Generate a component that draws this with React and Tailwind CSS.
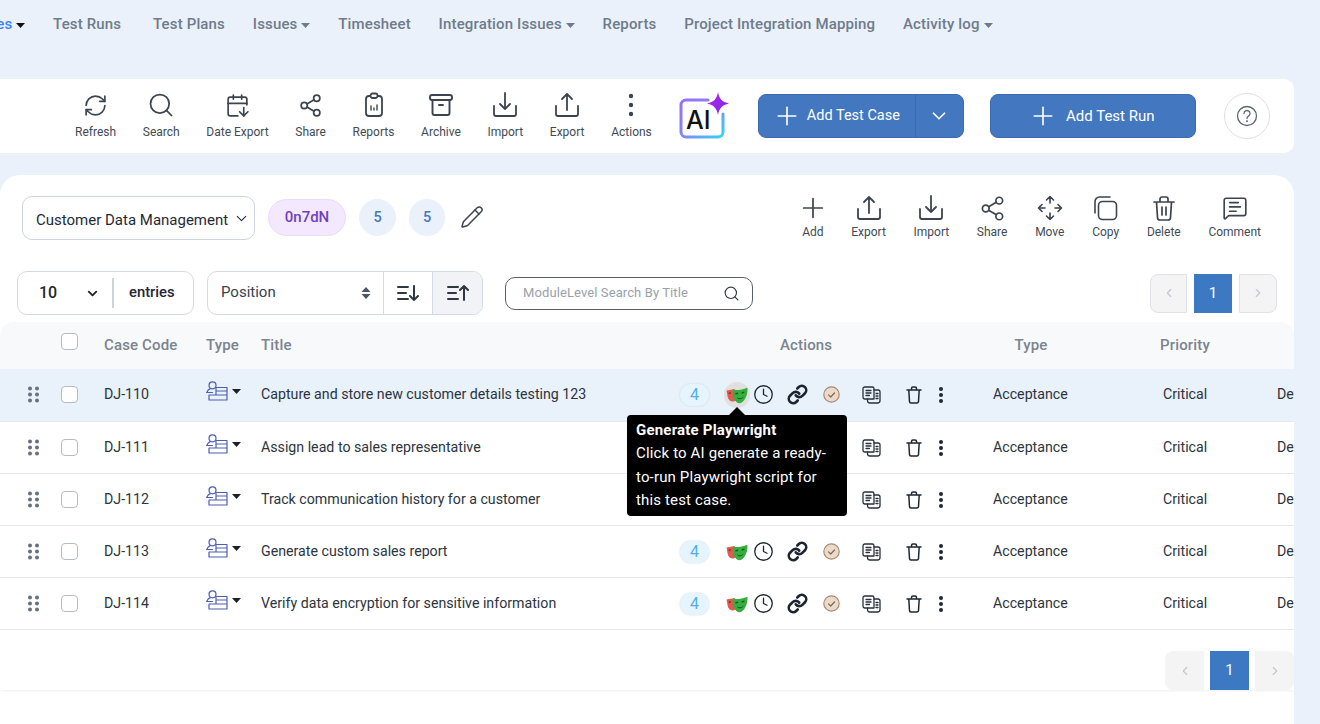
import React from "react";
import { RefreshCw, Search, CalendarArrowDown, Share2, Plus, ChevronDown, Pencil, MessageSquareText, Clock, Link, ChevronLeft, ChevronRight } from "lucide-react";

const Caret = ({ c = "#6f7b8b" }) => (
  <svg width="9" height="5" viewBox="0 0 9 5" className="ml-[4px] inline-block align-middle"><path d="M0 0h9L4.5 5z" fill={c} /></svg>
);

const Tray = ({ up, size = 26 }) => (
  <svg width={size} height={size} viewBox="0 0 26 26" fill="none" stroke="#3c444f" strokeWidth="1.8" strokeLinecap="round" strokeLinejoin="round">
    <path d="M2 14v8a2 2 0 0 0 2 2h18a2 2 0 0 0 2-2v-8" />
    {up ? <path d="M13 18V2M8 7l5-5 5 5" /> : <path d="M13 1v16M8 12l5 5 5-5" />}
  </svg>
);

const Clip = () => (
  <svg width="24" height="26" viewBox="0 0 24 26" fill="none" stroke="#3c444f" strokeWidth="1.8" strokeLinecap="round" strokeLinejoin="round">
    <rect x="4" y="4" width="16" height="20" rx="3" />
    <rect x="8.5" y="1.5" width="7" height="4.5" rx="2" fill="#fff" />
    <path d="M9 18v-4M12 18v-2M15 18v-5" strokeWidth="1.4" />
  </svg>
);

const Arch = () => (
  <svg width="26" height="26" viewBox="0 0 26 26" fill="none" stroke="#3c444f" strokeWidth="1.9" strokeLinecap="round" strokeLinejoin="round">
    <rect x="2" y="3" width="22" height="5" rx="2" />
    <path d="M4.5 8v13a2 2 0 0 0 2 2h13a2 2 0 0 0 2-2V8M11 13h4" />
  </svg>
);

const Dots = ({ r = 2.2, gap = 9, c = "#3c444f", h = 26 }) => (
  <svg width="8" height={h} viewBox={`0 0 8 ${h}`}>
    {[-gap, 0, gap].map((d) => <circle key={d} cx="4" cy={h / 2 + d} r={r} fill={c} />)}
  </svg>
);

const Tool = ({ icon, label, tight }) => (
  <div className="flex flex-col items-center">
    <div className="h-[26px] w-0 flex items-center justify-center [&>svg]:shrink-0">{icon}</div>
    <span className={`${tight ? "mt-[3px]" : "mt-[6px]"} text-[12px] leading-[16px] text-[#3f4a56] whitespace-nowrap`}>{label}</span>
  </div>
);

const MoveIcon = () => (
  <svg width="26" height="26" viewBox="0 0 26 26" fill="none" stroke="#3c444f" strokeWidth="1.600" strokeLinecap="round" strokeLinejoin="round">
    <path d="M9.500 5 13 1.500 16.500 5M13 1.500V8M9.500 21 13 24.500 16.500 21M13 24.500V18M5 9.500 1.500 13 5 16.500M1.500 13H8M21 9.500 24.500 13 21 16.500M24.500 13H18" />
  </svg>
);

const CopyIcon = () => (
  <svg width="25" height="25" viewBox="0 0 25 25" fill="none" stroke="#3c444f" strokeWidth="1.600" strokeLinecap="round" strokeLinejoin="round">
    <rect x="5.500" y="5.500" width="18" height="18" rx="4" />
    <path d="M2 17V5.500A4.500 4.500 0 0 1 6.500 1H17" />
  </svg>
);

const BinIcon = () => (
  <svg width="22" height="25" viewBox="0 0 22 25" fill="none" stroke="#3c444f" strokeWidth="1.700" strokeLinecap="round" strokeLinejoin="round">
    <path d="M1 6h20M7 6V3a2 2 0 0 1 2-2h4a2 2 0 0 1 2 2v3M3.500 6l1 15.500A2.500 2.500 0 0 0 7 24h8a2.500 2.500 0 0 0 2.500-2.500L18.500 6M9 11v8M13 11v8" />
  </svg>
);

const AiLogo = () => (
  <svg width="50" height="48" viewBox="0 0 50 48" fill="none" className="overflow-visible">
    <defs>
      <linearGradient id="aig" x1="0" y1="0" x2="1" y2="1">
        <stop offset="0" stopColor="#9b6cf5" />
        <stop offset="0.55" stopColor="#7d8cf8" />
        <stop offset="1" stopColor="#2fd6f2" />
      </linearGradient>
      <linearGradient id="star" x1="0" y1="0" x2="1" y2="1">
        <stop offset="0" stopColor="#c026d3" />
        <stop offset="1" stopColor="#6d28ff" />
      </linearGradient>
    </defs>
    <path d="M30 8H8a5 5 0 0 0-5 5V40a5 5 0 0 0 5 5h32a5 5 0 0 0 5-5V22" stroke="url(#aig)" strokeWidth="3" strokeLinecap="round" />
    <path d="M40 0c1 6.500 4 10 11 11.500-7 1.500-10 5-11 11.500-1-6.500-4-10-11-11.500 7-1.500 10-5 11-11.500z" fill="url(#star)" />
    <text x="8" y="37" fontFamily="Inter, sans-serif" fontSize="25" fontWeight="500" fill="#111">AI</text>
  </svg>
);

const Mask = () => (
  <svg width="22" height="18" viewBox="0 0 20 16">
    <path d="M0.500 4 8 2.500 9 12c-1 1.500-2 2-3 2C4 14 2 12 1.500 9.500z" fill="#e0584f" />
    <path d="M6 3.200C9 4 14.500 3.500 19.500 1.500 19.800 5.500 18.800 10 16.500 12.800c-1.500 1.800-3 2.700-4.200 2.700-1.500 0-3.300-1.200-4.500-3C6.600 10.300 6 6.500 6 3.200z" fill="#36ad3f" />
    <path d="M8.500 7l2.500-.6M14.200 6.300l2.500-.9" stroke="#14581c" strokeWidth="1.200" />
    <path d="M10 10c1.500 1.500 4 1.500 6-.6-1 3-5 3.400-6 .6z" fill="#14581c" />
    <path d="M2.500 6.500l2-.5" stroke="#7d1f1a" strokeWidth="1" />
  </svg>
);

const Done = () => (
  <svg width="17" height="17" viewBox="0 0 17 17" fill="none">
    <circle cx="8.500" cy="8.500" r="7.700" fill="#ecd9c8" stroke="#a98b75" strokeWidth="1.200" />
    <path d="M5.500 8.800l2.200 2.200 3.800-4" stroke="#7c6a5c" strokeWidth="1.200" strokeLinecap="round" strokeLinejoin="round" />
  </svg>
);

const Doc = () => (
  <svg width="19" height="18" viewBox="0 0 19 18" fill="none" stroke="#27303b" strokeWidth="1.300" strokeLinecap="round" strokeLinejoin="round">
    <path d="M2.800 1h7.400a1.800 1.800 0 0 1 1.800 1.800V13H2.800A1.800 1.800 0 0 1 1 11.200V2.800A1.800 1.800 0 0 1 2.800 1z" />
    <path d="M4 4.500h5M4 7h5M4 9.500h3.500" />
    <path d="M12 4h4a2 2 0 0 1 2 2v8.500a2.500 2.500 0 0 1-2.500 2.500H8a2.500 2.500 0 0 1-2.500-2.500V13" />
    <path d="M14 7.500h2M14 10h2M14 12.500h2" />
  </svg>
);

const Trash = () => (
  <svg width="16" height="18" viewBox="0 0 16 18" fill="none" stroke="#1f2731" strokeWidth="1.500" strokeLinecap="round" strokeLinejoin="round">
    <path d="M1 4h14M5.500 4V2.500a1.500 1.500 0 0 1 1.500-1.500h2a1.500 1.500 0 0 1 1.500 1.500V4M2.800 4l.7 11.500a1.500 1.500 0 0 0 1.500 1.500h6a1.500 1.500 0 0 0 1.500-1.500L13.200 4" />
  </svg>
);

const TypeIcon = () => (
  <svg width="22" height="20" viewBox="0 0 22 20" fill="none" stroke="#4d5fb0" strokeWidth="1.200" strokeLinecap="round" strokeLinejoin="round">
    <circle cx="6.500" cy="4.300" r="3.500" />
    <path d="M0.800 11.500c.7-2 2-3.300 3.500-3.900" />
    <path d="M0.800 11.500H6.500M10 6.500h11v12.500H3v-5h7V6.500zM10 14h11M10 10h11" />
  </svg>
);

const Check = ({ className = "" }) => (
  <span className={`block w-[17px] h-[17px] rounded-[4px] border border-[#b5bbc3] bg-white ${className}`} />
);

const cols = "grid grid-cols-[61px_43px_102px_55px_419px_313px_170px_114px_100px] items-center";

const Row = ({ code, title, active }) => (
  <div className={`${cols} ${active ? "h-[53px] pb-[1px] bg-[#e9f1fa]" : "h-[52px] bg-white"} border-b border-[#e6e8eb] text-[14.200px] text-[#2b3440]`}>
    <div className="pl-[28px]">
      <svg width="11" height="17" viewBox="0 0 11 17" fill="#66707e">
        {[2.500, 8.500, 14.500].flatMap((y) => [2, 9].map((x) => <circle key={`${x}-${y}`} cx={x} cy={y} r="2" />))}
      </svg>
    </div>
    <Check />
    <div>{code}</div>
    <div className="flex items-center -mt-[8px]">
      <TypeIcon />
      <svg width="9" height="5" viewBox="0 0 9 5" className="ml-[4px] mt-[2px]"><path d="M0 0h9L4.500 5z" fill="#1b2028" /></svg>
    </div>
    <div className="whitespace-nowrap">{title}</div>
    <div className="flex items-center">
      <span className="w-[29px] h-[22px] rounded-full bg-[#e6f4fd] shadow-[0_0_2px_#c7d4de] text-[#55ade9] text-[16px] flex items-center justify-center">4</span>
      <span className={`ml-[15px] w-[26px] h-[26px] rounded-full flex items-center justify-center ${active ? "bg-[#e0e0de]" : ""}`}><Mask /></span>
      <span className="w-[26px] flex justify-center"><Clock size={21} strokeWidth={1.500} color="#1f2731" /></span>
      <span className="ml-[4px] w-[34px] flex justify-center"><Link size={21} strokeWidth={3} color="#1b2430" /></span>
      <span className="w-[34px] flex justify-center"><Done /></span>
      <span className="w-[46px] flex justify-center"><Doc /></span>
      <span className="w-[40px] flex justify-center"><Trash /></span>
      <span className="w-[14px] flex justify-center"><Dots r={2} gap={6} c="#1f2731" h={18} /></span>
    </div>
    <div>Acceptance</div>
    <div>Critical</div>
    <div>Default</div>
  </div>
);

export default function App() {
  return (
    <div className="w-[1320px] h-[724px] overflow-hidden bg-[#eaf1fa] font-['Roboto',sans-serif]">
      <nav className="h-[79px] pt-[14px] flex items-start gap-[27.800px] text-[15px] leading-[20px] font-medium tracking-[0.15px] text-[#6f7b8b] whitespace-nowrap">
        <span className="-ml-[63.500px] text-[#3b82f6]">Test Cases<Caret c="#111" /></span>
        <span>Test Runs</span>
        <span className="ml-[4px]">Test Plans</span>
        <span>Issues<Caret /></span>
        <span>Timesheet</span>
        <span>Integration Issues<Caret /></span>
        <span>Reports</span>
        <span>Project Integration Mapping</span>
        <span>Activity log<Caret /></span>
      </nav>

      <section className="w-[1294px] h-[74px] bg-white rounded-r-[10px] flex items-center pl-[75px]">
        <div className="flex gap-[26.700px]">
          <Tool label="Refresh" icon={<RefreshCw size={25} strokeWidth={1.600} color="#3c444f" />} />
          <Tool label="Search" icon={<Search size={28} strokeWidth={1.500} color="#3c444f" />} />
          <Tool label="Date Export" icon={<CalendarArrowDown size={25} strokeWidth={1.600} color="#3c444f" />} />
          <Tool label="Share" icon={<Share2 size={25} strokeWidth={1.600} color="#3c444f" />} />
          <Tool label="Reports" icon={<Clip />} />
          <Tool label="Archive" icon={<Arch />} />
          <Tool label="Import" icon={<Tray />} />
          <Tool label="Export" icon={<Tray up />} />
          <Tool label="Actions" icon={<Dots />} />
        </div>
        <div className="ml-[26px]"><AiLogo /></div>
        <div className="ml-[30px] w-[206px] h-[44px] bg-[#4378c0] border border-[#3a6bae] rounded-[8px] flex items-center text-white text-[14.500px]">
          <div className="flex-1 flex items-center pl-[13px] gap-[5px]"><Plus size={30} strokeWidth={1.300} />Add Test Case</div>
          <div className="w-[48px] h-full border-l border-[#3a6bae] flex items-center justify-center"><ChevronDown size={22} strokeWidth={1.800} /></div>
        </div>
        <div className="ml-[26px] w-[206px] h-[44px] bg-[#4378c0] border border-[#3a6bae] rounded-[8px] flex items-center justify-center gap-[8px] pr-[3px] text-white text-[15px]">
          <Plus size={30} strokeWidth={1.300} />Add Test Run
        </div>
        <div className="ml-[28px] w-[46px] h-[46px] rounded-full bg-white border border-[#dbe0e7] flex items-center justify-center">
          <svg width="22" height="22" viewBox="0 0 22 22" fill="none" stroke="#5b6675" strokeWidth="1.300" strokeLinecap="round">
            <circle cx="11" cy="11" r="9.500" />
            <path d="M8 8.500a3 3 0 1 1 4.500 2.600c-1 .6-1.500 1.200-1.500 2.400" />
            <circle cx="11" cy="16.300" r=".4" />
          </svg>
        </div>
      </section>

      <main className="mt-[22px] w-[1294px] h-[549px] bg-white rounded-t-[20px] overflow-hidden pt-[21px]">
        <div className="h-[44px] flex items-start pl-[22px]">
          <div className="w-[233px] h-[44px] border border-[#cfd5de] rounded-[10px] flex items-center pl-[13px] text-[15px] text-[#1f2a37] whitespace-nowrap">
            <span className="pt-[4px]">Customer Data Management</span>
            <ChevronDown size={17} strokeWidth={1.500} className="ml-[5px]" />
          </div>
          <span className="ml-[13px] mt-[3px] w-[78px] h-[37px] rounded-full bg-[#f3e8fd] border border-[#eadbf9] flex items-center justify-center text-[15px] font-medium text-[#6f42c1]">0n7dN</span>
          <span className="ml-[13px] mt-[3px] w-[37px] h-[37px] rounded-full bg-[#eaf1fa] flex items-center justify-center text-[14.500px] font-medium text-[#4378c0]">5</span>
          <span className="ml-[13px] mt-[3px] w-[36px] h-[37px] rounded-full bg-[#eaf1fa] flex items-center justify-center text-[14.500px] font-medium text-[#4378c0]">5</span>
          <span className="ml-[15px] mt-[9px]"><Pencil size={24} strokeWidth={1.500} color="#3c444f" /></span>
          <div className="ml-auto mr-[33px] -mt-[1px] flex gap-[27.700px]">
            <Tool tight label="Add" icon={<Plus size={32} strokeWidth={1.300} color="#3c444f" />} />
            <Tool tight label="Export" icon={<Tray up />} />
            <Tool tight label="Import" icon={<Tray />} />
            <Tool tight label="Share" icon={<Share2 size={27} strokeWidth={1.500} color="#3c444f" />} />
            <Tool tight label="Move" icon={<MoveIcon />} />
            <Tool tight label="Copy" icon={<CopyIcon />} />
            <Tool tight label="Delete" icon={<BinIcon />} />
            <Tool tight label="Comment" icon={<MessageSquareText size={26} strokeWidth={1.500} color="#3c444f" />} />
          </div>
        </div>

        <div className="mt-[31px] h-[44px] flex items-center pl-[17px]">
          <div className="w-[177px] h-[44px] border border-[#d5dae2] rounded-[10px] flex items-center pl-[21px] text-[#1f2731]">
            <span className="text-[16px] font-medium w-[46px]">10</span>
            <ChevronDown size={15} strokeWidth={3} />
            <span className="ml-[12px] w-[2px] h-[30px] bg-[#ced3da]" />
            <span className="ml-[15px] text-[14.800px] font-medium -mt-[2px]">entries</span>
          </div>
          <div className="ml-[13px] w-[276px] h-[44px] border border-[#d5dae2] rounded-[10px] overflow-hidden flex items-center text-[15px] text-[#374151]">
            <div className="w-[175px] flex items-center pl-[13px] pr-[12px]">
              <span className="flex-1 -mt-[2px]">Position</span>
              <svg width="10" height="12" viewBox="0 0 10 12" fill="#4b5563"><path d="M5 0l4.500 5h-9zM5 12L.5 7h9z" /></svg>
            </div>
            <div className="w-[49px] h-full border-l border-[#d5dae2] flex items-center justify-center">
              <svg width="22" height="18" viewBox="0 0 22 18" fill="none" stroke="#2f3742" strokeWidth="2" strokeLinecap="round" strokeLinejoin="round"><path d="M1 3h10M1 9h8M1 15h10M17 2v14M13 12l4 4 4-4" /></svg>
            </div>
            <div className="flex-1 h-full border-l border-[#d5dae2] bg-[#f1f3f7] flex items-center justify-center">
              <svg width="22" height="18" viewBox="0 0 22 18" fill="none" stroke="#2f3742" strokeWidth="2" strokeLinecap="round" strokeLinejoin="round"><path d="M1 3h10M1 9h8M1 15h10M17 16V2M13 6l4-4 4 4" /></svg>
            </div>
          </div>
          <div className="ml-[22px] w-[248px] h-[33px] border border-[#5a6068] rounded-[10px] flex items-center pl-[17px] pr-[12px] text-[13px] tracking-[0.1px] text-[#9aa1ab]">
            <span className="flex-1">ModuleLevel Search By Title</span>
            <Search size={17} strokeWidth={1.600} color="#2f3742" />
          </div>
          <div className="ml-auto mr-[17px] flex gap-[7px] items-center">
            <span className="w-[37px] h-[39px] bg-[#f4f4f4] border border-[#dfe2e8] rounded-l-[8px] flex items-center justify-center text-[#c3c6cc]"><ChevronLeft size={14} /></span>
            <span className="w-[38px] h-[39px] bg-[#3d79c2] text-white text-[15px] flex items-center justify-center">1</span>
            <span className="w-[38px] h-[39px] bg-[#f4f4f4] border border-[#dfe2e8] rounded-r-[8px] flex items-center justify-center text-[#c3c6cc]"><ChevronRight size={14} /></span>
          </div>
        </div>

        <div className="relative mt-[7px]">
          <div className={`${cols} h-[47px] bg-[#f8f9fb] rounded-t-[14px] text-[15px] font-medium tracking-[0.15px] text-[#7b8490]`}>
            <div />
            <Check className="-mt-[8px] bg-white" />
            <div>Case Code</div>
            <div>Type</div>
            <div>Title</div>
            <div className="pl-[100px]">Actions</div>
            <div className="w-[76px] text-center">Type</div>
            <div className="-ml-[3px]">Priority</div>
            <div />
          </div>
          <Row active code="DJ-110" title="Capture and store new customer details testing 123" />
          <Row code="DJ-111" title="Assign lead to sales representative" />
          <Row code="DJ-112" title="Track communication history for a customer" />
          <Row code="DJ-113" title="Generate custom sales report" />
          <Row code="DJ-114" title="Verify data encryption for sensitive information" />

          <div className="absolute left-[627px] top-[93px] w-[220px] h-[101px] bg-black rounded-[4px] px-[9px] pt-[4px] text-[15px] leading-[23.400px] text-white z-10">
            <span className="absolute left-[102px] -top-[8px] w-0 h-0 border-x-[8px] border-x-transparent border-b-[8px] border-b-black" />
            <div className="font-bold tracking-[0.2px]">Generate Playwright</div>
            <div className="tracking-[0.15px]">Click to AI generate a ready-to-run Playwright script for this test case.</div>
          </div>
        </div>

        <div className="mt-[21px] h-[39px] flex justify-end gap-[6px] shadow-[0_2px_2px_-1px_#eeeff2]">
          <span className="w-[39px] h-[39px] bg-[#f4f4f4] rounded-l-[8px] flex items-center justify-center text-[#c3c6cc]"><ChevronLeft size={14} /></span>
          <span className="w-[39px] h-[39px] bg-[#3d79c2] text-white text-[15px] flex items-center justify-center">1</span>
          <span className="w-[39px] h-[39px] bg-[#f4f4f4] rounded-r-[8px] flex items-center justify-center text-[#c3c6cc]"><ChevronRight size={14} /></span>
        </div>
      </main>
    </div>
  );
}
